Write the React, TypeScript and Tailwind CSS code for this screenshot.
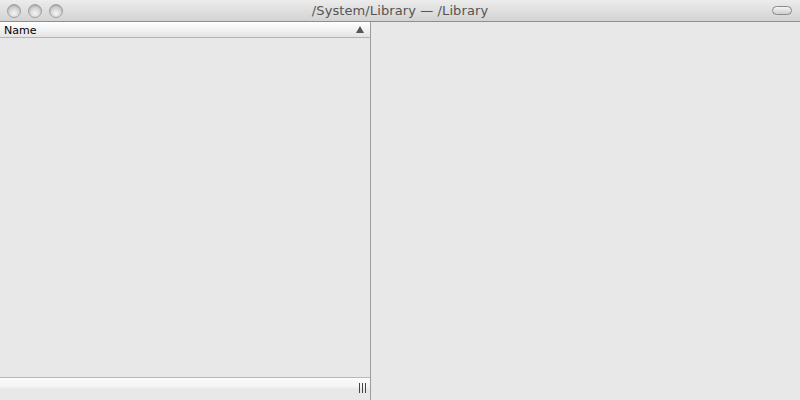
import React from 'react';

const TrafficLight = () => (
  <div className="w-[14px] h-[14px] rounded-full border border-[#a0a0a0] bg-[radial-gradient(circle_at_50%_70%,#f6f6f6,#cdcdcd_60%,#acacac)] shadow-[inset_0_1px_1px_rgba(0,0,0,0.12)]" />
);

const App: React.FC = () => {
  return (
    <div className="w-[800px] h-[400px] flex flex-col bg-[#e8e8e8] overflow-hidden font-['DejaVu_Sans',sans-serif]">
      {/* Title bar */}
      <div className="h-[22px] grid grid-cols-[1fr_auto_1fr] items-center border-b border-[#8f8f8f] bg-[linear-gradient(#ececec,#d3d3d3)]">
        <div className="flex items-center gap-[7px] pl-[7px]">
          <TrafficLight />
          <TrafficLight />
          <TrafficLight />
        </div>
        <div className="text-[13px] text-[#555] tracking-[0.1px] whitespace-nowrap">
          /System/Library — /Library
        </div>
        <div className="flex justify-end pr-[8px]">
          <div className="w-[20px] h-[9px] rounded-full border border-[#8a8a8a] bg-[linear-gradient(#f4f4f4,#cfcfcf)]" />
        </div>
      </div>

      {/* Body */}
      <div className="flex-1 flex min-h-0">
        <div className="w-[371px] flex flex-col border-r border-[#9c9c9c]">
          <div className="h-[16px] flex items-center justify-between pl-[4px] pr-[6px] border-b border-[#b5b5b5] bg-[linear-gradient(#ffffff,#f2f2f2_50%,#e4e4e4)]">
            <span className="text-[11px] text-black leading-none mt-[1px]">Name</span>
            <svg width="8" height="7" viewBox="0 0 8 7">
              <polygon points="4,0 8,7 0,7" fill="#555" />
            </svg>
          </div>
          <div className="flex-1" />
          <div className="h-[23px] flex items-start justify-end pr-[4px] border-t border-[#b8b8b8] bg-[linear-gradient(#fbfbfb,#f4f4f4_40%,#e8e8e8_50%)]">
            <div className="flex gap-[2px] mt-[5px]">
              <div className="w-[1px] h-[10px] bg-[#444]" />
              <div className="w-[1px] h-[10px] bg-[#444]" />
              <div className="w-[1px] h-[10px] bg-[#444]" />
            </div>
          </div>
        </div>
        <div className="flex-1" />
      </div>
    </div>
  );
};

export default App;
